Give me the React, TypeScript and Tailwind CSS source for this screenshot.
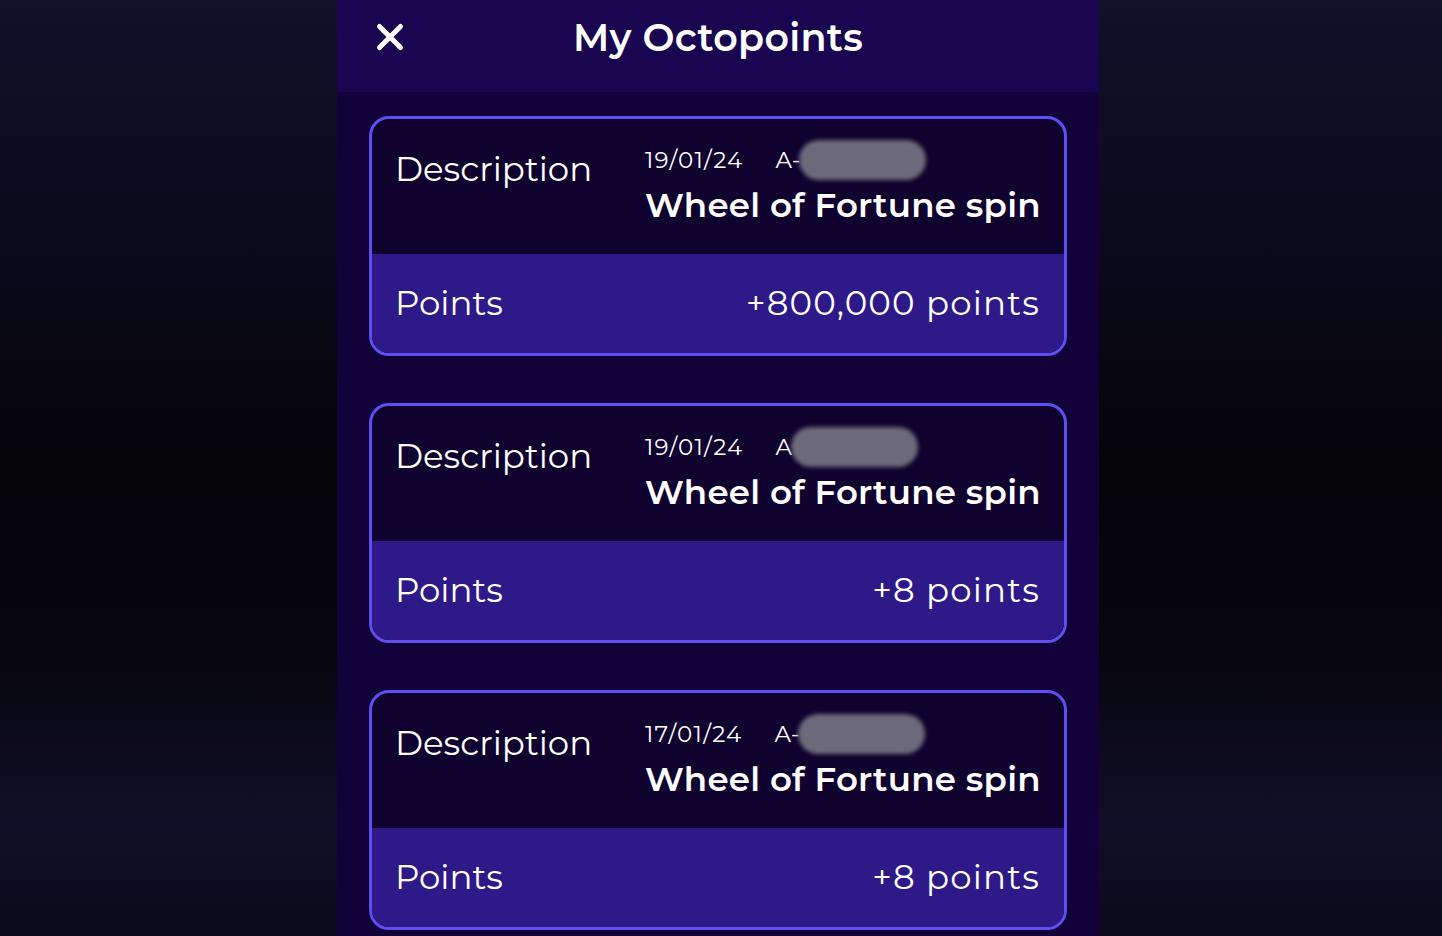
// Octopoints history: a centred phone-width panel over a dark vignette.

interface Entry {
  date: string;
  ref: string;
  title: string;
  points: string;
}

const entries: Entry[] = [
  { date: "19/01/24", ref: "A-", title: "Wheel of Fortune spin", points: "+800,000 points" },
  { date: "19/01/24", ref: "A", title: "Wheel of Fortune spin", points: "+8 points" },
  { date: "17/01/24", ref: "A-", title: "Wheel of Fortune spin", points: "+8 points" },
];

function EntryCard({ entry }: { entry: Entry }) {
  return (
    <div className="overflow-hidden rounded-[20px] border-[3px] border-[#5e4ff0] bg-[#10022f]">
      <div className="flex h-[135px] items-start pl-[23px] pr-[24px] pt-[27px]">
        <div className="w-[250px] shrink-0 text-[34px] leading-[46px] text-white">Description</div>
        <div className="flex-1 whitespace-nowrap">
          <div className="-mt-[3px] flex h-[34px] items-center text-[23px] text-white">
            <span className="tracking-[1.3px]">{entry.date}</span>
            <span className="ml-[32px]">{entry.ref}</span>
            {/* redacted account number */}
            <span className="-ml-[1px] h-[40px] w-[127px] rounded-full bg-[#6c6a7a] blur-[2px]" />
          </div>
          <div className="mt-[8px] text-[34px] font-semibold leading-[40px] tracking-[0.25px] text-white">
            {entry.title}
          </div>
        </div>
      </div>
      <div className="flex h-[99px] items-center justify-between bg-[#2d1a88] pl-[23px] pr-[24px] text-[34px] text-white">
        <span>Points</span>
        <span className="tracking-[1.2px]">{entry.points}</span>
      </div>
    </div>
  );
}

export default function App() {
  return (
    <div
      className="flex h-[936px] w-full justify-center overflow-hidden pr-[6px] bg-[linear-gradient(180deg,#12102a_0%,#0b0a1c_25%,#050409_50%,#07060f_70%,#110f28_88%,#0b0a1a_100%)]"
      style={{ fontFamily: '"Montserrat", "Noto Sans", "Liberation Sans", sans-serif' }}
    >
      <div className="flex w-[762px] flex-col bg-[#12023a]">
        <div className="relative flex h-[92px] shrink-0 items-start justify-center bg-[#1a0550] pt-[14px]">
          <svg
            className="absolute left-[38px] top-[22px] h-[30px] w-[30px]"
            viewBox="0 0 30 30"
            fill="none"
            stroke="white"
            strokeWidth={5}
            strokeLinecap="round"
          >
            <line x1="4.5" y1="4.5" x2="25.5" y2="25.5" />
            <line x1="25.5" y1="4.5" x2="4.5" y2="25.5" />
          </svg>
          <h1 className="text-[38px] font-semibold leading-[48px] tracking-[0.3px] text-white">My Octopoints</h1>
        </div>
        <div className="flex flex-col gap-[47px] px-[32px] pt-[24px]">
          {entries.map((e, i) => (
            <EntryCard key={i} entry={e} />
          ))}
        </div>
      </div>
    </div>
  );
}
